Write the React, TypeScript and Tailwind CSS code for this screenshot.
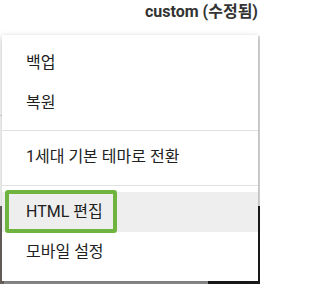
const items = [
  { group: ["백업", "복원"] },
  { group: ["1세대 기본 테마로 전환"] },
  { group: ["HTML 편집", "모바일 설정"], active: "HTML 편집" },
];

export default function App() {
  return (
    <div
      className="relative h-[284px] w-[260px] overflow-hidden bg-white text-[#212121]"
      style={{ fontFamily: 'Roboto, "Noto Sans CJK KR", sans-serif' }}
    >
      {/* page behind the menu */}
      <div className="flex h-[36px] items-start justify-end pr-[2px] pt-[1px]">
        <span className="text-[16px] font-bold leading-[22px] text-[#333]">custom (수정됨)</span>
      </div>
      <div className="flex h-[170px] flex-col border-r-2 border-[#e0e0e0]">
        <div className="h-[80px] border-b border-[#ddd]">
          <div className="ml-auto h-[34px] w-[2px] bg-[#c0655a]" />
        </div>
      </div>
      <div className="flex h-[78px]">
        <div className="w-[4px] bg-[#6b6560]" />
        <div className="flex-1 bg-[#9a9a9a]" />
        <div className="w-[52px] bg-[#1c1c1c]" />
      </div>

      {/* dropdown menu */}
      <div className="absolute left-[2px] right-[2px] top-[35px] bg-white shadow-[0_2px_6px_rgba(0,0,0,0.28)]">
        {items.map((section, i) => (
          <div
            key={i}
            className={
              i === 0
                ? "pt-2 pb-[7px] border-b border-[#e0e0e0]"
                : i === 1
                ? "pt-[6px] pb-2 border-b border-[#e0e0e0]"
                : "pt-[6px] pb-[9px]"
            }
          >
            {section.group.map((label) => (
              <div
                key={label}
                className={`flex h-[40px] items-center pl-6 text-[16px] ${
                  section.active === label ? "bg-[#eeeeee]" : ""
                }`}
              >
                {label}
              </div>
            ))}
          </div>
        ))}
      </div>

      {/* green highlight annotation */}
      <div className="absolute left-[5px] top-[190px] h-[43px] w-[112px] rounded-[3px] border-[4px] border-[#6fb43f]" />
    </div>
  );
}
